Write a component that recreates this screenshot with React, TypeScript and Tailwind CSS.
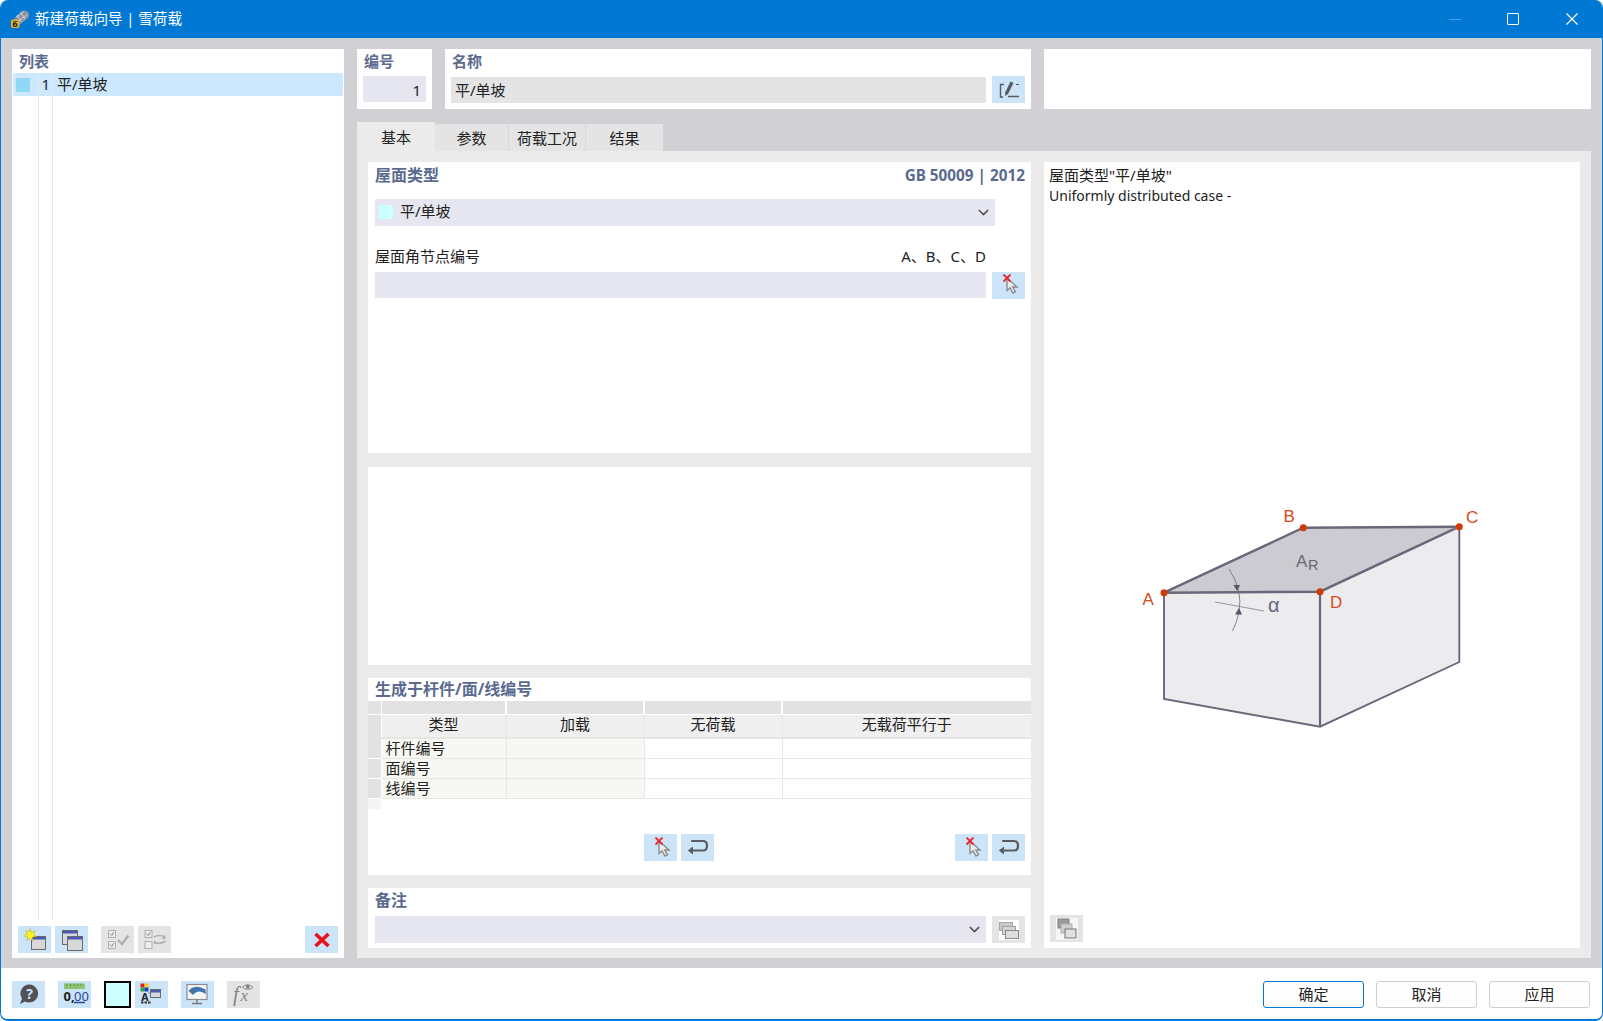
import { ReactNode } from 'react';
import { ChevronDown } from 'lucide-react';

const FONT = '"Noto Sans","Noto Sans CJK SC",sans-serif';

function IconButton({ children, off, className = '' }: { children: ReactNode; off?: boolean; className?: string }) {
  return (
    <div className={`flex h-[27px] w-[33px] shrink-0 items-center justify-center ${off ? 'bg-[#e4e4e4]' : 'bg-[#cce4f7]'} ${className}`}>
      {children}
    </div>
  );
}

function PickIcon() {
  return (
    <svg width="24" height="22" viewBox="0 0 24 22">
      <path d="M10 4 L10 16.5 L13 13.8 L16 19 L18.5 17.8 L15.7 13 L20 13 Z" fill="#ececec" stroke="#8c8c8c" strokeWidth="1.4" />
      <path d="M6.5 0.5 L13.5 7.5 M13.5 0.5 L6.5 7.5" stroke="#ec2530" strokeWidth="1.8" />
    </svg>
  );
}

function ReturnIcon() {
  return (
    <svg width="24" height="20" viewBox="0 0 24 20">
      <path d="M5.2 3 H17 Q21 3 21 7.7 Q21 12.5 17 12.5 H5" fill="none" stroke="#5c5c5f" strokeWidth="2.2" />
      <path d="M1.8 12.5 L7 8.5 V16.5 Z" fill="#5c5c5f" />
    </svg>
  );
}

function EditIcon() {
  return (
    <svg width="24" height="20" viewBox="0 0 24 20">
      <path d="M7 4.5 H3.5 V17 H6 M11 16.5 H22" fill="none" stroke="#5a5a5e" strokeWidth="1.4" />
      <path d="M13.5 1.5 L16.5 3 L11 14 L8.2 16 L8.2 12.5 Z" fill="#5a5a5e" />
      <path d="M19 4.5 H22" stroke="#5a5a5e" strokeWidth="1" />
    </svg>
  );
}

function Win({ x, y, w = 14, h = 13 }: { x: number; y: number; w?: number; h?: number }) {
  return (
    <g>
      <rect x={x} y={y} width={w} height={h} fill="#d8d8d8" stroke="#6a6a6a" />
      <rect x={x + 0.5} y={y + 0.5} width={w - 1} height="2.5" fill="#4a56b8" />
    </g>
  );
}

function NewIcon() {
  return (
    <svg width="24" height="24" viewBox="0 0 24 24">
      <Win x={8.5} y={8.5} />
      <path d="M7 0.5 L8.4 4.4 L12.5 3 L10.4 6.6 L13.5 8.6 L9.6 9 L9.4 13 L7 10 L4 12.5 L4.7 8.8 L0.7 8 L4.4 6 L2.6 2.6 L6 3.8 Z" fill="#fbf219" stroke="#a89a10" strokeWidth="0.4" />
    </svg>
  );
}

function CopyIcon() {
  return (
    <svg width="24" height="24" viewBox="0 0 24 24">
      <Win x={2.5} y={2.5} w={15} h={14} />
      <Win x={7.5} y={8.5} w={15} h={14} />
    </svg>
  );
}

function CheckAllIcon() {
  return (
    <svg width="24" height="22" viewBox="0 0 24 22">
      <rect x="2.5" y="1.5" width="7" height="7" fill="#ececec" stroke="#b0b0b0" />
      <rect x="2.5" y="12.5" width="7" height="7" fill="#ececec" stroke="#b0b0b0" />
      <path d="M4 4.5 L5.8 6.5 L8 3 M4 15.5 L5.8 17.5 L8 14" fill="none" stroke="#8a8a8a" />
      <path d="M12 11 L16 15 L22.5 6.5" fill="none" stroke="#b0b0b0" strokeWidth="2.4" />
    </svg>
  );
}

function CheckSwapIcon() {
  return (
    <svg width="26" height="22" viewBox="0 0 26 22">
      <rect x="3" y="1.5" width="7" height="7" fill="#ececec" stroke="#b0b0b0" />
      <rect x="3" y="12.5" width="7" height="7" fill="#eeeeee" stroke="#b0b0b0" />
      <path d="M4.5 4.5 L6.3 6.5 L8.5 3" fill="none" stroke="#8a8a8a" />
      <path d="M12 8 Q17 5 23 8 M12 13 Q18 16 23.5 12" fill="none" stroke="#b0b0b0" strokeWidth="1.7" />
      <path d="M23.5 5.5 V10 H19.5 Z M12 11 V15 H16 Z" fill="#b0b0b0" />
    </svg>
  );
}

function HelpIcon() {
  return (
    <svg width="24" height="24" viewBox="0 0 24 24">
      <path d="M12.5 2.5 A9 9 0 1 1 8 19.5 L3 22 L5 16.5 A9 9 0 0 1 12.5 2.5 Z" fill="#505055" />
      <text x="12.5" y="16.5" textAnchor="middle" fontSize="14" fontWeight="700" fill="#cce4f7" fontFamily={FONT}>?</text>
    </svg>
  );
}

function UnitsIcon() {
  return (
    <svg width="30" height="26" viewBox="0 0 30 26">
      <rect x="4" y="2.5" width="21" height="5.5" fill="#8cc474" />
      <path d="M7 2.5 V5 M10.5 2.5 V5 M14 2.5 V5 M17.5 2.5 V5 M21 2.5 V5" stroke="#4f8a3c" strokeWidth="0.8" />
      <text x="3.5" y="19.5" fontSize="13" fontWeight="700" fill="#222" fontFamily={FONT}>0,</text>
      <text x="14" y="19.5" fontSize="13" fill="#26479e" fontFamily={FONT}>00</text>
      <path d="M14 21.5 H25" stroke="#26479e" strokeWidth="1.4" />
    </svg>
  );
}

function ColorsIcon() {
  return (
    <svg width="26" height="26" viewBox="0 0 26 26">
      <rect x="1.5" y="2.5" width="4" height="4" fill="#e02020" />
      <rect x="5.5" y="2.5" width="4" height="4" fill="#f0d020" />
      <rect x="1.5" y="6.5" width="4" height="4" fill="#30a040" />
      <rect x="5.5" y="6.5" width="4" height="4" fill="#2040c0" />
      <path d="M9 12 H11" stroke="#888" />
      <Win x={11.5} y={8.5} w={10} h={8} />
      <text x="6" y="20" textAnchor="middle" fontSize="10.5" fontWeight="700" fill="#222" fontFamily={FONT}>A</text>
      <path d="M2 21.5 H4.5 M5.5 21.5 H8 M9 21.5 H11.5" stroke="#333" strokeWidth="2" />
    </svg>
  );
}

function DisplayIcon() {
  return (
    <svg width="24" height="24" viewBox="0 0 24 24">
      <rect x="1" y="2.5" width="20" height="15" fill="#f4f4f4" stroke="#8a8a8f" strokeWidth="1.2" />
      <path d="M2.5 9 Q9 1.5 19.5 7.5 L20 12 Q12 6.5 7 13 Z" fill="#3f76ac" />
      <path d="M11 17.5 V21 M6 21.5 H16" stroke="#77777c" strokeWidth="1.4" />
    </svg>
  );
}

function FormulaIcon() {
  return (
    <svg width="28" height="26" viewBox="0 0 28 26">
      <g fontStyle="italic" fill="#858585" fontFamily='"Liberation Serif",serif'>
        <text x="3" y="20" fontSize="21">f</text>
        <text x="10.5" y="20" fontSize="17">x</text>
      </g>
      <path d="M12.5 6.5 Q17.5 1 23 6.5 Q17.5 10 12.5 6.5 Z" fill="#f4f4f4" stroke="#858585" />
      <circle cx="17.8" cy="5.8" r="2" fill="#858585" />
    </svg>
  );
}

function ImageIcon() {
  return (
    <svg width="22" height="22" viewBox="0 0 22 22">
      <rect x="0" y="0" width="22" height="22" fill="#f6f6f6" />
      <rect x="2" y="1" width="11" height="9" fill="#9a9a9a" stroke="#808080" />
      <rect x="5" y="6" width="11" height="9" fill="#cfcfcf" stroke="#b0b0b0" />
      <rect x="9" y="11" width="11" height="9" fill="#e0e0e0" stroke="#777" />
    </svg>
  );
}

function StackIcon() {
  return (
    <svg width="20" height="20" viewBox="0 0 20 20">
      <rect x="0" y="0" width="20" height="20" fill="#fff" />
      <rect x="0.5" y="2.5" width="13" height="8" fill="#c8c8c8" stroke="#a8a8a8" />
      <rect x="3.5" y="6.5" width="13" height="8" fill="#d4d4d4" stroke="#a0a0a0" />
      <rect x="6.5" y="10.5" width="13" height="8" fill="#dedede" stroke="#8a8a8a" />
    </svg>
  );
}

function TitleIcon() {
  return (
    <svg width="20" height="20" viewBox="0 0 20 20">
      <path d="M4 10 L12 2 Q16 0.5 18.5 3.5 Q20 7 17.5 9.5 L9 16 Z" fill="#8c92a2" />
      <path d="M6 8 L14 2.5 M8.5 12 L17 6 M10.5 3.5 L15 10 M7 6 L11.5 13" stroke="#dde1ea" strokeWidth="0.8" />
      <rect x="1" y="10.5" width="8.5" height="8.5" rx="2" fill="#e0b030" />
      <text x="5.2" y="17.6" textAnchor="middle" fontSize="9" fontWeight="700" fill="#222" fontFamily={FONT}>6</text>
    </svg>
  );
}

function RoofDiagram() {
  return (
    <svg width="380" height="250" viewBox="1120 490 380 250" className="ml-[76px] mt-[284px] shrink-0">
      <path d="M1164 592.7 L1320 591.7 L1320 726.7 L1164 699 Z" fill="#ececef" />
      <path d="M1320 591.7 L1459.3 526.7 L1459.3 662 L1320 726.7 Z" fill="#ececef" />
      <path d="M1164 592.7 L1303.3 527.7 L1459.3 526.7 L1320 591.7 Z" fill="#cbcbd1" />
      <path d="M1164 592.7 V699 L1320 726.7 L1459.3 662 V526.7" fill="none" stroke="#68687a" strokeWidth="1.9" />
      <path d="M1164 592.7 L1303.3 527.7 L1459.3 526.7 L1320 591.7 Z" fill="none" stroke="#68687a" strokeWidth="2.4" />
      <path d="M1320 591.7 V726.7" stroke="#68687a" strokeWidth="2.2" />
      <path d="M1229 569 Q1243 590 1239 612 Q1237 622 1232.5 631" fill="none" stroke="#68687a" strokeWidth="0.8" />
      <path d="M1215 602 L1264 611" stroke="#8a8a96" strokeWidth="0.9" />
      <path d="M1233.5 585 L1240 585 L1237 591 Z" fill="#55556a" />
      <path d="M1235 614.5 L1242 614.5 L1239 608 Z" fill="#55556a" />
      <g fontFamily='"Liberation Sans",sans-serif'>
        <text x="1142.5" y="605" fontSize="17" fill="#d84a1a">A</text>
        <text x="1283.5" y="522" fontSize="17" fill="#d84a1a">B</text>
        <text x="1466" y="523" fontSize="17" fill="#d84a1a">C</text>
        <text x="1330" y="608" fontSize="17" fill="#d84a1a">D</text>
        <text x="1296" y="566.5" fontSize="17" fill="#68687a">A</text>
        <text x="1308" y="570" fontSize="14.5" fill="#68687a">R</text>
        <text x="1268" y="612" fontSize="20" fill="#68687a">α</text>
      </g>
      <circle cx="1164" cy="592.7" r="3.5" fill="#d03a08" />
      <circle cx="1303.3" cy="527.7" r="3.5" fill="#d03a08" />
      <circle cx="1459.3" cy="526.7" r="3.5" fill="#d03a08" />
      <circle cx="1320" cy="591.7" r="3.5" fill="#d03a08" />
    </svg>
  );
}

function Heading({ children }: { children: ReactNode }) {
  return <div className="text-[16px] font-bold leading-[20px] text-[#5b6a8f]">{children}</div>;
}

const tableRows = ['杆件编号', '面编号', '线编号'];
const sideCell = 'border-r border-b-2 border-[#e6e6e6] pb-[3px]';

export default function App() {
  return (
    <div className="h-[1021px] w-[1603px] overflow-hidden bg-white text-[15px] text-[#222]" style={{ fontFamily: FONT }}>
      <div className="flex h-full flex-col overflow-hidden rounded-[8px] border-x border-b-2 border-[#0078d4] bg-white">
        {/* title bar */}
        <div className="flex h-[38px] shrink-0 items-center bg-[#0078d4] pl-[9px] text-white">
          <TitleIcon />
          <span className="ml-[5px] text-[14.6px]">新建荷载向导 | 雪荷载</span>
          <div className="ml-auto flex items-center">
            <div className="mr-[46px] h-px w-[12px] bg-[#4a9ee0]" />
            <div className="mr-[47px] h-[12px] w-[12px] rounded-[1px] border-[1.5px] border-white" />
            <svg width="12" height="12" viewBox="0 0 12 12" className="mr-[24px]">
              <path d="M0.5 0.5 L11.5 11.5 M11.5 0.5 L0.5 11.5" stroke="#fff" strokeWidth="1.2" />
            </svg>
          </div>
        </div>

        {/* body */}
        <div className="flex h-[930px] shrink-0 gap-[13px] bg-[#d0d0d5] pl-[11px] pr-[11px] pt-[11px] pb-[10px]">
          {/* list */}
          <div className="flex w-[332px] shrink-0 flex-col bg-white">
            <div className="pl-[7px] pt-[1px] font-semibold leading-[23px] text-[#5b6a8f]">列表</div>
            <div className="mx-px flex h-[23px] items-center rounded-[2px] bg-[#cce8ff]">
              <div className="w-[25px] pl-[3px]"><div className="h-[14px] w-[14px] bg-[#90d8f6]" /></div>
              <div className="flex h-full w-[15px] items-center justify-end border-x border-[#e8e8e8] pr-[2px]">1</div>
              <span className="ml-[4px]">平/单坡</span>
            </div>
            <div className="ml-[26px] w-[15px] flex-1 border-x border-[#e8e8e8]" />
            <div className="flex items-center px-[6px] pb-[5px] pt-[6px]">
              <IconButton><NewIcon /></IconButton>
              <IconButton className="ml-[4px]"><CopyIcon /></IconButton>
              <IconButton off className="ml-[13px]"><CheckAllIcon /></IconButton>
              <IconButton off className="ml-[4px]"><CheckSwapIcon /></IconButton>
              <IconButton className="ml-auto">
                <svg width="16" height="14" viewBox="0 0 16 14">
                  <path d="M1.5 1 L14.5 13 M14.5 1 L1.5 13" stroke="#e8141c" strokeWidth="3.6" />
                </svg>
              </IconButton>
            </div>
          </div>

          {/* main */}
          <div className="flex min-w-0 flex-1 flex-col">
            <div className="flex h-[60px] shrink-0">
              <div className="w-[75px] bg-white px-[6px]">
                <div className="mb-[2px] pl-px font-semibold leading-[25px] text-[#5b6a8f]">编号</div>
                <div className="flex h-[26px] items-center justify-end bg-[#e6e6f0] pr-[5px] pt-[2px]">1</div>
              </div>
              <div className="ml-[13px] w-[586px] bg-white pl-[6px] pr-[6px]">
                <div className="mb-[2px] pl-px font-semibold leading-[25px] text-[#5b6a8f]">名称</div>
                <div className="flex items-center gap-[6px]">
                  <div className="flex h-[26px] flex-1 items-center bg-[#e4e4e4] pl-[4px] pt-[2px]">平/单坡</div>
                  <IconButton><EditIcon /></IconButton>
                </div>
              </div>
              <div className="ml-[13px] flex-1 bg-white" />
            </div>

            {/* tabs */}
            <div className="mt-[13px] flex h-[29px] shrink-0 items-end">
              <div className="flex h-[29px] w-[78px] items-center justify-center bg-[#ebebeb] pt-[2px]">基本</div>
              <div className="flex h-[27px] w-[74px] items-center justify-center border-r border-[#d8d8d8] bg-[#e4e4e4] pt-px">参数</div>
              <div className="flex h-[27px] w-[77px] items-center justify-center border-r border-[#d8d8d8] bg-[#e4e4e4] pt-px">荷载工况</div>
              <div className="flex h-[27px] w-[77px] items-center justify-center bg-[#e4e4e4] pt-px">结果</div>
            </div>

            <div className="flex min-h-0 flex-1 gap-[13px] bg-[#ebebeb] p-[11px] pb-[10px]">
              <div className="flex w-[663px] shrink-0 flex-col">
                {/* roof type */}
                <div className="h-[291px] shrink-0 bg-white pl-[7px] pr-[6px] pt-[2px]">
                  <div className="flex items-center justify-between">
                    <Heading>屋面类型</Heading>
                    <span className="text-[15.3px] font-bold text-[#5b6a8f]">GB 50009 | 2012</span>
                  </div>
                  <div className="mt-[12px] flex h-[27px] w-[620px] items-center bg-[#e6e6f0] pl-[4px] pr-[3px]">
                    <div className="h-[14px] w-[14px] bg-[#ccffff]" />
                    <span className="ml-[7px] pb-[2px]">平/单坡</span>
                    <ChevronDown size={17} className="ml-auto text-[#555]" />
                  </div>
                  <div className="mt-[19px] flex h-[22px] items-center justify-between pr-[39px]">
                    <span>屋面角节点编号</span>
                    <span>A、B、C、D</span>
                  </div>
                  <div className="mt-[5px] flex items-center gap-[6px]">
                    <div className="h-[26px] flex-1 bg-[#e6e6f0]" />
                    <IconButton><PickIcon /></IconButton>
                  </div>
                </div>

                <div className="mt-[14px] h-[198px] shrink-0 bg-white" />

                {/* generate on */}
                <div className="mt-[13px] flex h-[197px] shrink-0 flex-col bg-white">
                  <div className="pl-[7px] pt-px"><Heading>生成于杆件/面/线编号</Heading></div>
                  <table className="mt-[2px] w-full table-fixed border-collapse text-center text-[15px]">
                    <colgroup>
                      <col className="w-[13px]" />
                      <col className="w-[125px]" />
                      <col className="w-[138px]" />
                      <col className="w-[138px]" />
                      <col />
                    </colgroup>
                    <tbody>
                      <tr className="h-[13px] bg-[#e2e2e2]">
                        <td className="border-r border-white" />
                        <td className="border-r-2 border-white" />
                        <td className="border-r-2 border-white" />
                        <td className="border-r-2 border-white" />
                        <td />
                      </tr>
                      <tr className="h-[24px] border-t border-white bg-[#efefef] leading-[18px]">
                        <td className="border-r border-white bg-[#e2e2e2]" />
                        <td className={sideCell}>类型</td>
                        <td className={sideCell}>加载</td>
                        <td className={sideCell}>无荷载</td>
                        <td className="border-b-2 border-[#e6e6e6] pb-[3px]">无载荷平行于</td>
                      </tr>
                      {tableRows.map((r) => (
                        <tr key={r} className="h-[20px] leading-[18px]">
                          <td className="border-r border-b border-white bg-[#e2e2e2]" />
                          <td className="border-r border-b border-[#e6e6e6] bg-[#f7f8f3] pb-px pl-[4px] text-left">{r}</td>
                          <td className="border-r border-b border-[#e6e6e6] bg-[#f7f8f3]" />
                          <td className="border-r border-b border-[#e6e6e6]" />
                          <td className="border-b border-[#e6e6e6]" />
                        </tr>
                      ))}
                    </tbody>
                  </table>
                  <div className="h-[10px] w-[13px] bg-[#f4f4f4]" />
                  <div className="mt-[25px] flex gap-[4px] pl-[276px] pr-[6px]">
                    <IconButton><PickIcon /></IconButton>
                    <IconButton><ReturnIcon /></IconButton>
                    <IconButton className="ml-auto"><PickIcon /></IconButton>
                    <IconButton><ReturnIcon /></IconButton>
                  </div>
                </div>

                {/* notes */}
                <div className="mt-[13px] h-[60px] shrink-0 bg-white pl-[7px] pr-[6px] pt-[2px]">
                  <Heading>备注</Heading>
                  <div className="mt-[6px] flex items-center gap-[6px]">
                    <div className="flex h-[27px] flex-1 items-center justify-end bg-[#e6e6f0] pr-[3px]">
                      <ChevronDown size={17} className="text-[#555]" />
                    </div>
                    <IconButton off><StackIcon /></IconButton>
                  </div>
                </div>
              </div>

              {/* picture pane */}
              <div className="flex min-w-0 flex-1 flex-col bg-white">
                <div className="pl-[5px] pt-[3px] leading-[20px]">
                  <div className="mb-px">屋面类型"平/单坡"</div>
                  <div className="text-[14px]">Uniformly distributed case -</div>
                </div>
                <RoofDiagram />
                <IconButton off className="ml-[6px] mt-auto mb-[6px]"><ImageIcon /></IconButton>
              </div>
            </div>
          </div>
        </div>

        {/* footer */}
        <div className="flex flex-1 items-center bg-white pl-[11px] pr-[12px] pt-[1px]">
          <IconButton><HelpIcon /></IconButton>
          <IconButton className="ml-[13px]"><UnitsIcon /></IconButton>
          <div className="ml-[13px] h-[27px] w-[27px] border-2 border-black bg-[#ccffff]" />
          <IconButton className="ml-[4px]"><ColorsIcon /></IconButton>
          <IconButton className="ml-[13px]"><DisplayIcon /></IconButton>
          <IconButton off className="ml-[13px]"><FormulaIcon /></IconButton>
          <div className="ml-auto flex gap-[12px]">
            <button className="h-[27px] w-[101px] rounded-[3px] border border-[#0078d4] bg-[#fdfdfd]">确定</button>
            <button className="h-[27px] w-[101px] rounded-[3px] border border-[#d0d0d0] bg-[#fdfdfd]">取消</button>
            <button className="h-[27px] w-[101px] rounded-[3px] border border-[#d0d0d0] bg-[#fdfdfd]">应用</button>
          </div>
        </div>
      </div>
    </div>
  );
}
